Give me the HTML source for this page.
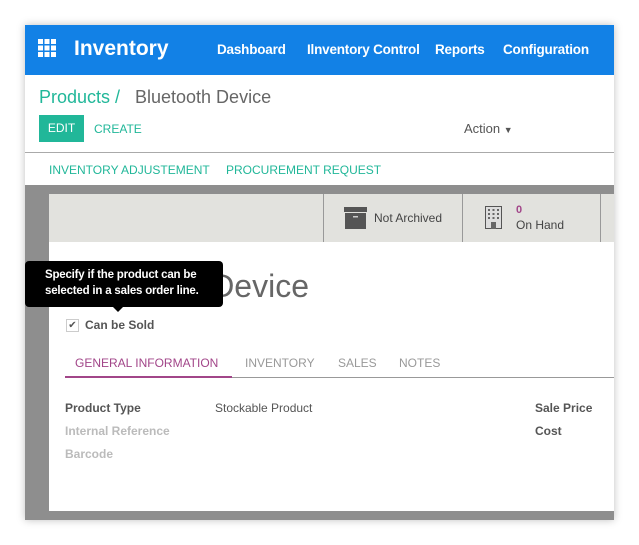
<!DOCTYPE html>
<html><head><meta charset="utf-8"><style>
*{margin:0;padding:0;box-sizing:border-box}
body{width:639px;height:545px;background:#fff;font-family:"Liberation Sans",Arial,sans-serif;position:relative;overflow:hidden}
.a{position:absolute;white-space:nowrap}
.win{position:absolute;left:25px;top:25px;width:589px;height:495px;background:#fff;box-shadow:0 0 8px rgba(0,0,0,.25);overflow:hidden}
.nav{position:absolute;left:0;top:0;width:589px;height:50px;background:#1281e6}
.nav .m{color:#fff;font-weight:bold;font-size:13.5px;top:17px;letter-spacing:-0.2px}
.teal{color:#21b799}
.grey{position:absolute;left:0;top:160px;width:589px;height:335px;background:#8e8e8e}
.sheet{position:absolute;left:24px;top:169px;width:565px;height:317px;background:#fff}
.stat{position:absolute;left:0;top:0;width:565px;height:48px;background:#e2e2de}
.lbl{font-size:12px;font-weight:bold;color:#555}
</style></head><body>
<div class="win">
 <div class="nav">
  <svg class="a" style="left:13px;top:14px" width="18" height="18" viewBox="0 0 18 18" fill="#fff">
   <rect x="0" y="0" width="5" height="5"/><rect x="6.5" y="0" width="5" height="5"/><rect x="13" y="0" width="5" height="5"/>
   <rect x="0" y="6.5" width="5" height="5"/><rect x="6.5" y="6.5" width="5" height="5"/><rect x="13" y="6.5" width="5" height="5"/>
   <rect x="0" y="13" width="5" height="5"/><rect x="6.5" y="13" width="5" height="5"/><rect x="13" y="13" width="5" height="5"/>
  </svg>
  <div class="a" style="left:49px;top:12px;color:#fff;font-size:21px;font-weight:bold">Inventory</div>
  <div class="a m" style="left:192px">Dashboard</div>
  <div class="a m" style="left:282px">Ilnventory Control</div>
  <div class="a m" style="left:410px">Reports</div>
  <div class="a m" style="left:478px">Configuration</div>
 </div>
 <div class="a teal" style="left:14px;top:62px;font-size:18px">Products /</div>
 <div class="a" style="left:110px;top:62px;font-size:18px;color:#666">Bluetooth Device</div>
 <div class="a" style="left:14px;top:90px;width:45px;height:27px;background:#21b799;color:#fff;font-size:12px;line-height:27px;text-align:center">EDIT</div>
 <div class="a teal" style="left:69px;top:97px;font-size:12px">CREATE</div>
 <div class="a" style="left:439px;top:96px;font-size:13px;color:#555">Action <span style="font-size:9px">▼</span></div>
 <div class="a" style="left:0;top:127px;width:589px;height:1px;background:#aaa"></div>
 <div class="a teal" style="left:24px;top:138px;font-size:12px">INVENTORY ADJUSTEMENT</div>
 <div class="a teal" style="left:201px;top:138px;font-size:12px">PROCUREMENT REQUEST</div>
 <div class="grey"></div>
 <div class="sheet">
  <div class="stat">
   <div class="a" style="left:274px;top:0;width:1px;height:48px;background:#999"></div>
   <div class="a" style="left:413px;top:0;width:1px;height:48px;background:#999"></div>
   <div class="a" style="left:551px;top:0;width:1px;height:48px;background:#999"></div>
   <svg class="a" style="left:295px;top:13px" width="23" height="22" viewBox="0 0 23 22"><rect x="0" y="0" width="23" height="5" fill="#555"/><rect x="1" y="6" width="21" height="16" fill="#555"/><rect x="9" y="9" width="5" height="1.5" fill="#ccc"/></svg>
   <div class="a" style="left:325px;top:17px;font-size:12px;color:#444">Not Archived</div>
   <svg class="a" style="left:436px;top:12px" width="17" height="23" viewBox="0 0 17 23"><rect x="0.5" y="0.5" width="16" height="22" fill="#ddd" stroke="#555"/><g fill="#666"><rect x="3" y="3" width="2" height="2"/><rect x="7.5" y="3" width="2" height="2"/><rect x="12" y="3" width="2" height="2"/><rect x="3" y="7" width="2" height="2"/><rect x="7.5" y="7" width="2" height="2"/><rect x="12" y="7" width="2" height="2"/><rect x="3" y="11" width="2" height="2"/><rect x="7.5" y="11" width="2" height="2"/><rect x="12" y="11" width="2" height="2"/><rect x="6" y="16" width="5" height="7"/></g></svg>
   <div class="a" style="left:467px;top:10px;font-size:11px;font-weight:bold;color:#a24689">0</div>
   <div class="a" style="left:467px;top:24px;font-size:12px;color:#444">On Hand</div>
  </div>
  <div class="a" style="right:305px;top:74px;font-size:32px;color:#666">Bluetooth Device</div>
  <div class="a" style="left:17px;top:125px;width:13px;height:13px;border:1px solid #ccc;font-size:10px;line-height:11px;text-align:center;color:#555">✔</div>
  <div class="a" style="left:36px;top:124px;font-size:12px;font-weight:bold;color:#555">Can be Sold</div>
  <div class="a" style="left:26px;top:162px;font-size:12px;color:#a24689">GENERAL INFORMATION</div>
  <div class="a" style="left:196px;top:162px;font-size:12px;color:#999">INVENTORY</div>
  <div class="a" style="left:289px;top:162px;font-size:12px;color:#999">SALES</div>
  <div class="a" style="left:350px;top:162px;font-size:12px;color:#999">NOTES</div>
  <div class="a" style="left:16px;top:183px;width:549px;height:1px;background:#999"></div>
  <div class="a" style="left:16px;top:182px;width:167px;height:2px;background:#a24689"></div>
  <div class="a lbl" style="left:16px;top:207px">Product Type</div>
  <div class="a" style="left:166px;top:207px;font-size:12px;color:#555">Stockable Product</div>
  <div class="a lbl" style="left:16px;top:230px;color:#bbb">Internal Reference</div>
  <div class="a lbl" style="left:16px;top:253px;color:#bbb">Barcode</div>
  <div class="a lbl" style="left:486px;top:207px">Sale Price</div>
  <div class="a lbl" style="left:486px;top:230px">Cost</div>
 </div>
</div>
<div class="a" style="left:25px;top:261px;width:198px;height:46px;background:#000;border-radius:4px;color:#fff;font-size:11.5px;line-height:16px;padding:6px 0 0 20px;font-weight:bold;letter-spacing:-0.2px">Specify if the product can be<br>selected in a sales order line.</div>
<div class="a" style="left:113px;top:307px;width:0;height:0;border-left:5px solid transparent;border-right:5px solid transparent;border-top:5px solid #000"></div>
</body></html>
